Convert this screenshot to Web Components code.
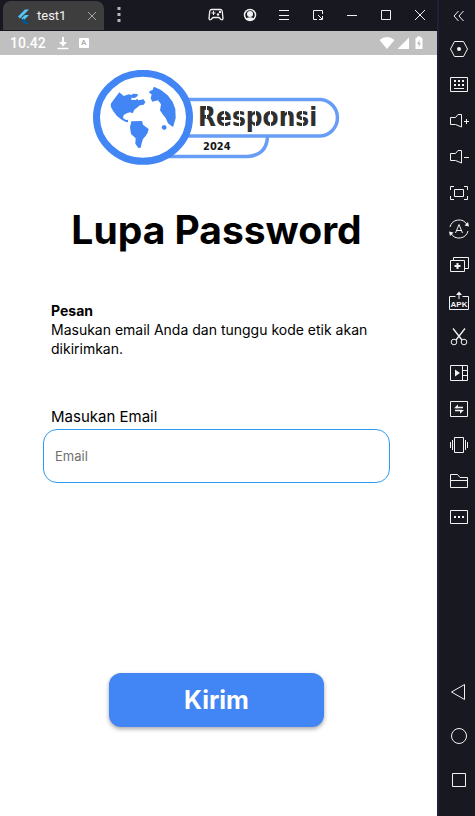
<!DOCTYPE html>
<html lang="id">
<head>
<meta charset="utf-8">
<meta name="viewport" content="width=device-width, initial-scale=1">
<title>Lupa Password</title>
<style>
body { margin: 0; background: #181820; }
</style>
</head>
<body>
<emulator-window></emulator-window>
<script>
const ICONS = {
  gamepad: '<path stroke-width="1.300" d="M7.500 6.500H16.500Q18 6.500 18.300 8.500L19 15.500Q18.500 17.500 17 16.500L15 14.500H9L7 16.500Q5.500 17.500 5 15.500L5.700 8.500Q6 6.500 7.500 6.500Z"/><path d="M9.500 8v4M7.500 10h4"/><g class="f"><circle cx="14" cy="11.500" r="1.200"/><circle cx="16" cy="9" r="1.200"/></g>',
  user: '<circle cx="12" cy="12" r="5.500" stroke-width="1.500"/><g class="f"><circle cx="12" cy="11" r="3"/><path d="M8 15.500Q12 13 16 15.500Q12 19 8 15.500Z"/></g>',
  menu: '<path d="M7 7.500H17M7 12.500H17M7 16.500H17"/>',
  resize: '<path d="M11 16.500H7.500V7.500H16.500V11M16.500 13V16.500H13M12 12L16 16"/>',
  minimize: '<path d="M7 12.500H17"/>',
  maximize: '<path d="M7.500 7.500H16.500V16.500H7.500Z"/>',
  close: '<path d="M7 7L17 17M17 7L7 17"/>',
  closetab: '<path d="M8 8L16 16M16 8L8 16"/>',
  more: '<g class="f"><path d="M10.500 4h3v3h-3zM10.500 10h3v3h-3zM10.500 16h3v3h-3z"/></g>',
  collapse: '<path d="M11.500 7L7 12L11.500 17M16.500 7L12 12L16.500 17"/>',
  hexagon: '<path d="M3.500 12L7.500 4.500H16.500L20.500 12L16.500 19.500H7.500Z"/><circle class="f" cx="12" cy="12" r="2"/>',
  keyboard: '<path d="M3.500 4.500H20.500V18.500H3.500ZM7 15.500H17"/><path class="f" d="M7 7h2v2H7zM11 7h2v2h-2zM15 7h2v2h-2zM7 11h2v2H7zM11 11h2v2h-2zM15 11h2v2h-2z"/>',
  volup: '<path d="M3.500 8.500H8.500L11 5.500H14.500V18L8.500 15.500H3.500ZM17 12.500H22M19.500 10V15"/>',
  voldown: '<path d="M3.500 8.500H8.500L11 5.500H14.500V18L8.500 15.500H3.500ZM17 12.500H22"/>',
  fullscreen: '<path d="M7.500 8.500H16.500V15.500H7.500ZM3.500 9V5.500H7M17 5.500H20.500V9M20.500 15V18.500H17M7 18.500H3.500V15"/>',
  rotate: '<path d="M3 10A9.300 9.300 0 0 1 20 7.500M21 14A9.300 9.300 0 0 1 4 16.500"/><path class="f" d="M17.500 8.500L22 9.500L21 5ZM6.500 15.500L2 14.500L3 19Z"/><path d="M8.500 16L12 7.500L15.500 16M9.500 13.500H14.500"/>',
  addwin: '<path d="M3.500 7.500H17.500V18.500H3.500ZM6.500 7V4.500H21.500V15.500H18"/><path d="M10.500 10V16M7.500 13H13.500" stroke-width="2"/>',
  apk: '<path d="M8.500 7.500H2.500V20.500H21.500V7.500H15.500M12 10V4"/><path class="f" d="M12 2.500L15 6H9Z"/><text x="12" y="17.500" text-anchor="middle">APK</text>',
  scissors: '<path d="M6 3.500L15 15M18 3.500L9 15" stroke-width="1.300"/><circle cx="7" cy="17" r="2.800"/><circle cx="17" cy="17" r="2.800"/>',
  video: '<path d="M3.500 4.500H20.500V19.500H3.500ZM15.500 4.500V19.500M15.500 9.500H20.500M15.500 14.500H20.500"/><path class="f" d="M8 8.500L13 12L8 15.500Z"/>',
  transfer: '<path d="M3.500 4.500H20.500V19.500H3.500Z"/><path d="M9 10.500H16M8 13.500H15" stroke-width="1.500"/><path class="f" d="M7 11.200L11 7.500V11.200ZM17 13L13 16.700V13Z"/>',
  vibrate: '<path d="M7.500 4.500H16.500V19.500H7.500ZM5.500 7V17M3.500 9V15M18.500 7V17M20.500 9V15"/>',
  folder: '<path d="M3.500 5.500H10.500L13 8.500H20.500V18.500H3.500ZM3.500 11.500H20.500"/>',
  dots: '<path d="M3.500 5.500H20.500V18.500H3.500Z"/><path class="f" d="M7 11h2v2H7zM11 11h2v2h-2zM15 11h2v2h-2z"/>',
  back: '<path d="M17.500 4.500V19.500L4.500 12Z" stroke-linejoin="round"/>',
  home: '<circle cx="12" cy="12" r="7.500"/>',
  recent: '<path d="M5.500 5.500H18.500V18.500H5.500Z"/>',
  flutter: '<path fill="#54c5f8" stroke="none" d="M14 5.500H18L9 14.500L7 12.500ZM14 11H18L12.500 16.500L10.300 14.500Z"/><path fill="#01579b" stroke="none" d="M10.500 16.500L12.500 14.500L18 20H14Z"/>',
  download: '<path d="M6.500 17.500H17.500" stroke-width="1.500"/><path class="f" d="M11 6h2v5h3l-4 4.500L8 11h3z"/>',
  wifi: '<path class="f" d="M4.500 9Q12 3 19.500 9L12 18Z"/>',
  signal: '<path class="f" d="M18 6.500V18H6.500Z"/>',
  battery: '<path class="f" fill-rule="evenodd" d="M10 5.500h4v1.500h1.500v11h-7v-11H10zM12.500 8.500L10 13h1.500v3.500L14 12h-1.500z"/>'
};

function define(name, html, setup) {
  const template = document.createElement('template');
  template.innerHTML = html;
  customElements.define(name, class extends HTMLElement {
    constructor() {
      super();
      this.attachShadow({ mode: 'open' }).append(template.content.cloneNode(true));
    }
    connectedCallback() { if (setup) setup(this, this.shadowRoot); }
  });
}

define('ui-icon', `
<style>
:host { display: block; width: 24px; height: 24px; flex: none; }
svg { display: block; width: 24px; height: 24px; flex: none; fill: none; stroke: currentColor; }
.f { fill: currentColor; stroke: none; }
text { fill: currentColor; stroke: none; font: bold 8px "Liberation Sans", sans-serif; }
</style>
<svg viewBox="0 0 24 24" aria-hidden="true"></svg>`,
(el, root) => { root.querySelector('svg').innerHTML = ICONS[el.getAttribute('name')]; });

define('icon-button', `
<style>
:host { display: block; }
button { display: flex; align-items: center; justify-content: center; width: 100%; height: 100%;
  padding: 0; border: 0; background: none; color: inherit; cursor: pointer; }
</style>
<button type="button"></button>`,
(el, root) => {
  const button = root.querySelector('button');
  button.setAttribute('aria-label', el.getAttribute('label'));
  const icon = document.createElement('ui-icon');
  icon.setAttribute('name', el.getAttribute('icon'));
  button.replaceChildren(icon);
});

define('title-bar', `
<style>
:host { display: flex; align-items: flex-start; height: 31px; color: #f2f2f4; background: #181820; }
.tab { display: flex; align-items: center; box-sizing: border-box; width: 101px; height: 29px; margin: 1px 0 0 3px;
  padding-left: 8px; border-radius: 8px 8px 0 0; background: #3e3e3e; font: 13px/20px Roboto, sans-serif; }
.name { flex: 1; padding-left: 2px; }
.tab icon-button { width: 24px; height: 24px; color: #a8a8a8; }
.more { width: 30px; height: 29px; color: #b8b8b8; }
.actions { display: flex; margin-left: auto; }
.actions icon-button { width: 34px; height: 29px; }
</style>
<div class="tab"><ui-icon name="flutter"></ui-icon><span class="name">test1</span><icon-button icon="closetab" label="Close tab"></icon-button></div>
<icon-button class="more" icon="more" label="More"></icon-button>
<div class="actions">
<icon-button icon="gamepad" label="Gamepad"></icon-button>
<icon-button icon="user" label="Account"></icon-button>
<icon-button icon="menu" label="Menu"></icon-button>
<icon-button icon="resize" label="Resize"></icon-button>
<icon-button icon="minimize" label="Minimize"></icon-button>
<icon-button icon="maximize" label="Maximize"></icon-button>
<icon-button icon="close" label="Close"></icon-button>
</div>`);

define('tool-rail', `
<style>
:host { display: flex; flex-direction: column; box-sizing: border-box; padding: 0 0 14px 6px; color: #f2f2f4;
  background: linear-gradient(90deg, #1f1f3b 2px, #181820 2px); }
icon-button { height: 36px; }
.top { height: 31px; }
nav { margin-top: auto; }
nav icon-button { height: 44px; }
</style>
<icon-button class="top" icon="collapse" label="Collapse"></icon-button>
<icon-button icon="hexagon" label="Settings"></icon-button>
<icon-button icon="keyboard" label="Keyboard"></icon-button>
<icon-button icon="volup" label="Volume up"></icon-button>
<icon-button icon="voldown" label="Volume down"></icon-button>
<icon-button icon="fullscreen" label="Full screen"></icon-button>
<icon-button icon="rotate" label="Rotate"></icon-button>
<icon-button icon="addwin" label="New window"></icon-button>
<icon-button icon="apk" label="Install package"></icon-button>
<icon-button icon="scissors" label="Screenshot"></icon-button>
<icon-button icon="video" label="Record"></icon-button>
<icon-button icon="transfer" label="Transfer"></icon-button>
<icon-button icon="vibrate" label="Shake"></icon-button>
<icon-button icon="folder" label="Files"></icon-button>
<icon-button icon="dots" label="More tools"></icon-button>
<nav>
<icon-button icon="back" label="Back"></icon-button>
<icon-button icon="home" label="Home"></icon-button>
<icon-button icon="recent" label="Recent apps"></icon-button>
</nav>`);

define('status-strip', `
<style>
:host { display: flex; align-items: center; height: 24px; padding: 0 10px; background: #c0c0c0; color: #fff;
  font: 500 14px/24px Roboto, sans-serif; }
.a { display: grid; place-items: center; width: 10px; height: 10px; margin-left: 4px; border-radius: 1px; background: #fff;
  color: #b0b0b0; font: bold 8px/10px Roboto, sans-serif; }
.time { margin-right: 5px; }
.right { display: flex; margin-left: auto; }
.right ui-icon { width: 16px; display: flex; justify-content: center; }
</style>
<span class="time">10.42</span><ui-icon name="download"></ui-icon><span class="a">A</span>
<span class="right"><ui-icon name="wifi"></ui-icon><ui-icon name="signal"></ui-icon><ui-icon name="battery"></ui-icon></span>`);

define('brand-logo', `
<style>
:host { display: block; width: 248px; height: 95px; }
svg { display: block; width: 100%; height: 100%; }
text { font-family: "DejaVu Sans Condensed", "DejaVu Sans", sans-serif; font-weight: bold; }
</style>
<svg viewBox="8 10 248 95" role="img" aria-label="Responsi 2024">
<g fill="#fff" stroke="#689df6" stroke-width="3.500">
<path d="M80 96.500H163Q182 95 182.500 76"/>
<path d="M95 39.500H235.500A18.300 18.300 0 0 1 235.500 76H95Z"/>
</g>
<ellipse cx="58" cy="57.300" rx="46.500" ry="44" fill="#fff" stroke="#4285f4" stroke-width="7"/>
<g transform="scale(.3333333)" fill="#4285f4">
<path d="M103 97L116 108L132 103L140 105L144 101L158 102L158 108L149 114L140 113L138 119L151 120L158 117L160 121L176 118L181 127L176 134L165 136L148 149L143 160L136 157L127 159L116 165L114 174L123 180L129 179L129 187L121 185L108 178L96 168L86 155L78 142L77 132L86 119Z"/>
<path d="M139 184L171 183L174 194L191 207L188 218L182 228L174 237L170 250L167 263L160 264L151 251L152 235L138 222L135 202Z"/>
<path d="M202 91L207 80L228 90L248 106L263 126L271 147L272 174L265 199L262 200L249 190L242 174L233 163L225 151L228 133L219 121L202 125L197 115L200 103L192 98L195 92Z"/>
<path d="M231 197L240 195L245 201L243 208L236 210L230 204Z"/>
</g>
<text x="113" y="66" font-size="26" fill="#2f2f2f">Responsi</text>
<text x="118" y="90" font-size="11" fill="#151515">2024</text>
<path d="M121.500 45V58M139.500 50V68M154.500 50V68M170.500 50V68M185.500 50V68M202.500 50V56M217.500 50V68" stroke="#fff" stroke-width="1"/>
</svg>`);

define('message-note', `
<style>
:host { display: block; font-size: 14px; line-height: 19px; }
h2 { margin: 0; font-size: 14px; line-height: 19px; font-weight: 700; }
p { margin: 0; }
</style>
<h2><slot name="title"></slot></h2><p><slot></slot></p>`);

define('text-field', `
<style>
:host { display: block; }
label { display: block; padding-left: 8px; font-size: 15px; line-height: 24px; }
input { display: block; box-sizing: border-box; width: 100%; height: 54px; padding: 0 11px; border: 1px solid #2f9bef;
  border-radius: 14px; background: #fff; color: #000; font: 13px/18px Inter, sans-serif; outline: 0; }
input::placeholder { color: #6f6f6f; opacity: 1; }
</style>
<label for="field"></label><input id="field" type="email">`,
(el, root) => {
  root.querySelector('label').textContent = el.getAttribute('label');
  root.querySelector('input').placeholder = el.getAttribute('placeholder');
});

define('primary-button', `
<style>
:host { display: block; }
button { display: block; width: 100%; height: 54px; padding: 0; border: 0; border-radius: 12px; background: #4285f4; color: #fff;
  font: 700 25px/36px Inter, sans-serif; box-shadow: 0 2px 4px rgba(0,0,0,.35); cursor: pointer; }
</style>
<button type="submit"><slot></slot></button>`);

define('forgot-screen', `
<style>
:host { display: flex; flex-direction: column; box-sizing: border-box; flex: 1; padding: 15px 47px 89px 43px; background: #fff;
  color: #000; font-family: Inter, sans-serif; }
brand-logo { align-self: center; }
h1 { margin: 38px 0 44px; font-size: 39px; line-height: 54px; font-weight: 700; text-align: center; white-space: nowrap; }
message-note { margin: 0 8px 47px; }
primary-button { width: 62%; min-width: 160px; margin-top: auto; align-self: center; }
</style>
<brand-logo></brand-logo>
<h1>Lupa Password</h1>
<message-note><span slot="title">Pesan</span>Masukan email Anda dan tunggu kode etik akan dikirimkan.</message-note>
<text-field label="Masukan Email" placeholder="Email"></text-field>
<primary-button>Kirim</primary-button>`);

define('emulator-window', `
<style>
:host { display: grid; grid-template-columns: minmax(0, 1fr) 38px; min-height: 100vh; background: #181820; }
main { display: flex; flex-direction: column; min-width: 0; }
</style>
<main><title-bar></title-bar><status-strip></status-strip><forgot-screen></forgot-screen></main>
<tool-rail></tool-rail>`);
</script>
</body>
</html>
